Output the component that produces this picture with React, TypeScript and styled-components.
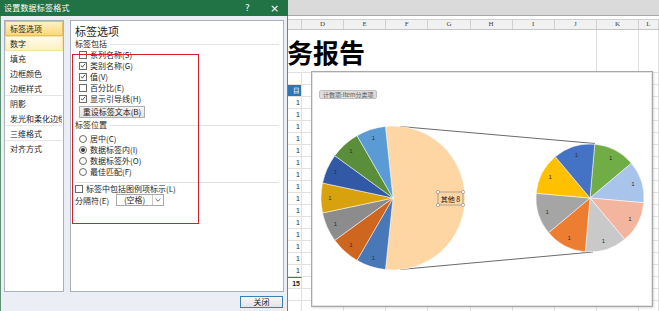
import React from "react";
import styled, { createGlobalStyle } from "styled-components";

const GlobalStyle = createGlobalStyle`
  html, body { margin: 0; padding: 0; background: #ffffff; overflow: hidden; }
  body { font-family: "Noto Sans CJK SC", "Noto Sans", sans-serif; }
  * { box-sizing: border-box; }
`;

const Page = styled.div`
  display: flex;
  width: 659px;
  height: 311px;
  overflow: hidden;
`;

/* ---------------- Dialog ---------------- */

const Dialog = styled.div`
  width: 288px;
  height: 311px;
  flex: none;
  display: flex;
  flex-direction: column;
  background: #ebeff5;
  border-left: 1px solid #5f8f72;
  border-right: 1px solid #5f8f72;
`;

const TitleBar = styled.div`
  height: 16px;
  flex: none;
  display: flex;
  align-items: center;
  background: #217346;
  color: #ffffff;
  padding-left: 4px;
  margin: 0 -1px;
`;

const TitleText = styled.div`
  flex: 1;
  font-size: 8px;
  line-height: 16px;
  letter-spacing: 0.2px;
`;

const TitleButton = styled.div`
  width: 27px;
  height: 16px;
  display: flex;
  align-items: center;
  justify-content: center;
  font-family: "DejaVu Sans", sans-serif;
  font-size: ${(p: { $size: number }) => p.$size}px;
  color: #ffffff;
`;

const DialogBody = styled.div`
  height: 276px;
  flex: none;
  display: flex;
  gap: 6px;
  padding: 4px 3px 0 3px;
`;

const NavList = styled.div`
  width: 60px;
  flex: none;
  background: #ffffff;
  border: 1px solid #a9b2bc;
  display: flex;
  flex-direction: column;
  overflow: hidden;
`;

const NavItem = styled.div<{ $state?: "active" | "hover"; $sep?: boolean }>`
  height: 15px;
  flex: none;
  font-size: 8px;
  line-height: 13px;
  padding-left: 4px;
  color: #262626;
  white-space: nowrap;
  overflow: hidden;
  border: 1px solid
    ${(p) => (p.$state === "active" ? "#e4c062" : p.$state === "hover" ? "#f6e2a2" : "transparent")};
  border-bottom-color: ${(p) =>
    p.$state === "active" ? "#e4c062" : p.$state === "hover" ? "#f6e2a2" : p.$sep ? "#e4e4e4" : "transparent"};
  background: ${(p) =>
    p.$state === "active"
      ? "linear-gradient(#fff1c4, #fcd876)"
      : p.$state === "hover"
      ? "linear-gradient(#fffbe8, #fdf0c2)"
      : "transparent"};
`;

const OptionsPanel = styled.div`
  flex: 1;
  position: relative;
  background: #ffffff;
  border: 1px solid #a9b2bc;
  padding: 2px 4px 0 4px;
  display: flex;
  flex-direction: column;
`;

const PanelTitle = styled.div`
  font-size: 11px;
  line-height: 14px;
  height: 14px;
  color: #1f1f1f;
  margin-top: 1px;
`;

const GroupHeader = styled.div<{ $gap?: number }>`
  height: 10px;
  margin-top: ${(p) => p.$gap ?? 0}px;
  display: flex;
  align-items: center;
  gap: 3px;
  font-size: 8px;
  line-height: 10px;
  color: #262626;
  &::after {
    content: "";
    flex: 1;
    height: 1px;
    background: #e2e2e2;
  }
`;

const OptionRow = styled.div<{ $indent?: number; $height?: number }>`
  height: ${(p) => p.$height ?? 11}px;
  display: flex;
  align-items: center;
  gap: 3px;
  padding-left: ${(p) => p.$indent ?? 4}px;
  font-size: 8px;
  color: #262626;
  white-space: nowrap;
`;

const CheckBox = styled.span`
  width: 8px;
  height: 8px;
  flex: none;
  border: 1px solid #6b6b6b;
  background: #ffffff;
  display: flex;
  align-items: center;
  justify-content: center;
`;

const RadioDot = styled.span<{ $on?: boolean }>`
  width: 8px;
  height: 8px;
  flex: none;
  border: 1px solid #6b6b6b;
  border-radius: 50%;
  background: #ffffff;
  display: flex;
  align-items: center;
  justify-content: center;
  &::after {
    content: "";
    width: 4px;
    height: 4px;
    border-radius: 50%;
    background: ${(p) => (p.$on ? "#333333" : "transparent")};
  }
`;

const ResetButton = styled.div`
  margin: 2px 0 0 4px;
  width: 66px;
  height: 12px;
  border: 1px solid #adadad;
  background: linear-gradient(#f6f6f6, #e2e2e2);
  font-size: 8px;
  line-height: 10px;
  text-align: center;
  color: #262626;
`;

const Divider = styled.div`
  height: 1px;
  background: #e2e2e2;
  margin-top: 5px;
`;

const SelectBox = styled.div`
  margin-left: 4px;
  width: 48px;
  height: 12px;
  border: 1px solid #a8a8a8;
  background: #ffffff;
  display: flex;
`;

const SelectText = styled.div`
  flex: 1;
  font-size: 8px;
  line-height: 10px;
  text-align: center;
  color: #262626;
`;

const SelectArrow = styled.div`
  width: 11px;
  border-left: 1px solid #c8c8c8;
  display: flex;
  align-items: center;
  justify-content: center;
`;

const Annotation = styled.div`
  position: absolute;
  left: 1px;
  top: 33px;
  width: 127px;
  height: 170px;
  border: 1px solid #d0202c;
  pointer-events: none;
`;

const DialogFooter = styled.div`
  flex: 1;
  display: flex;
  justify-content: flex-end;
  align-items: flex-start;
  padding: 4px 4px 0 0;
`;

const CloseButton = styled.div`
  width: 43px;
  height: 12px;
  border: 1px solid #3c7fb1;
  background: linear-gradient(#f7f7f7, #e4e4e4);
  font-size: 8px;
  line-height: 10px;
  text-align: center;
  color: #262626;
`;

/* ---------------- Sheet ---------------- */

const Sheet = styled.div`
  flex: 1;
  display: flex;
  flex-direction: column;
  overflow: hidden;
  background: #ffffff;
`;

const Ribbon = styled.div`
  height: 16px;
  flex: none;
  background: #dadada;
  border-bottom: 1px solid #a6a6a6;
`;

const RibbonGap = styled.div`
  height: 3px;
  flex: none;
`;

const COLS = "14px repeat(8, 42.125px) 1fr";

const HeaderRow = styled.div`
  height: 11px;
  flex: none;
  display: grid;
  grid-template-columns: ${COLS};
  background: #f1f1f1;
  border-top: 1px solid #d0d0d0;
  border-bottom: 1px solid #c6c6c6;
`;

const HeaderCell = styled.div`
  border-right: 1px solid #d0d0d0;
  font-family: "Liberation Serif", serif;
  font-size: 7px;
  line-height: 9px;
  text-align: center;
  color: #444444;
`;

const SheetBody = styled.div`
  flex: 1;
  position: relative;
  overflow: hidden;
`;

const CellGrid = styled.div`
  display: grid;
  grid-template-columns: ${COLS};
`;

const Cell = styled.div<{ $h: number; $fill?: string; $bold?: boolean; $topLine?: boolean }>`
  height: ${(p) => p.$h}px;
  border-right: 1px solid #e1e1e1;
  border-bottom: 1px solid #e1e1e1;
  border-top: ${(p) => (p.$topLine ? "1px solid #4d6a8a" : "none")};
  background: ${(p) => p.$fill ?? "transparent"};
  font-family: "Liberation Sans", sans-serif;
  font-size: 7px;
  font-weight: ${(p) => (p.$bold ? 700 : 400)};
  line-height: ${(p) => p.$h - 1}px;
  text-align: right;
  padding-right: 1px;
  color: ${(p) => (p.$fill ? "#ffffff" : "#222222")};
  overflow: hidden;
  white-space: nowrap;
`;

const TitleCell = styled.div`
  grid-column: 1 / 9;
  height: 43px;
  border-right: 1px solid #e1e1e1;
  border-bottom: 1px solid #e1e1e1;
  font-family: "Noto Sans CJK SC", sans-serif;
  font-size: 26px;
  font-weight: 700;
  line-height: 43px;
  color: #000000;
  white-space: nowrap;
  margin-left: -1px;
`;

const ChartBox = styled.div`
  position: absolute;
  left: 23px;
  top: 41px;
  width: 342px;
  height: 236px;
  background: #ffffff;
  border: 1px solid #a9a9a9;
  box-shadow: inset 0 0 0 1px #e4e4e4, 1px 1px 2px rgba(0, 0, 0, 0.15);
  padding: 6px 0 0 7px;
`;

const FieldTag = styled.div`
  display: inline-block;
  height: 9px;
  padding: 0 3px;
  border: 1px solid #c2c2c2;
  border-radius: 2px;
  background: #dcdcdc;
  font-size: 6px;
  line-height: 7px;
  color: #5a5a5a;
  white-space: nowrap;
`;

const ChartSvg = styled.svg`
  position: absolute;
  left: 0;
  top: 0;
`;

/* ---------------- helpers ---------------- */

function pt(cx: number, cy: number, r: number, deg: number): [number, number] {
  const a = ((deg - 90) * Math.PI) / 180;
  return [cx + r * Math.cos(a), cy + r * Math.sin(a)];
}

function slice(cx: number, cy: number, r: number, a0: number, a1: number) {
  const [x0, y0] = pt(cx, cy, r, a0);
  const [x1, y1] = pt(cx, cy, r, a1);
  const large = a1 - a0 > 180 ? 1 : 0;
  return `M${cx},${cy} L${x0.toFixed(2)},${y0.toFixed(2)} A${r},${r} 0 ${large} 1 ${x1.toFixed(2)},${y1.toFixed(2)} Z`;
}

const Check = () => (
  <svg width="7" height="7" viewBox="0 0 7 7">
    <path d="M1 3.6 L2.8 5.3 L6 1.4" fill="none" stroke="#333" strokeWidth="1" />
  </svg>
);

const LEFT_COLORS = ["#4878b8", "#cf661f", "#8c8c8c", "#d8a10e", "#3159a6", "#5b8e3b", "#5b9bd5"];
const RIGHT_COLORS = ["#70ad47", "#a9c4ea", "#f4b59e", "#c9c9c9", "#ed7d31", "#a5a5a5", "#ffc000", "#4472c4"];

const PieChart = () => {
  const lc = { x: 81, y: 126, r: 72 };
  const rc = { x: 278, y: 126, r: 54 };
  return (
    <ChartSvg width="342" height="236" viewBox="0 0 342 236">
      <line x1="88" y1="54.5" x2="283" y2="71.5" stroke="#595959" strokeWidth="0.9" />
      <line x1="88" y1="197.5" x2="281" y2="180" stroke="#595959" strokeWidth="0.9" />
      <path d={slice(lc.x, lc.y, lc.r, -6, 186)} fill="#fdd6a4" stroke="#ffffff" strokeWidth="0.5" />
      {LEFT_COLORS.map((c, i) => {
        const a0 = 186 + i * 24;
        const [tx, ty] = pt(lc.x, lc.y, 63, a0 + 12);
        return (
          <g key={c}>
            <path d={slice(lc.x, lc.y, lc.r, a0, a0 + 24)} fill={c} stroke="#ffffff" strokeWidth="0.5" />
            <text x={tx} y={ty + 2} fontSize="6" fill="#303030" textAnchor="middle" fontFamily="Liberation Sans, sans-serif">
              1
            </text>
          </g>
        );
      })}
      {RIGHT_COLORS.map((c, i) => {
        const a0 = 5 + i * 45;
        const [tx, ty] = pt(rc.x, rc.y, 45, a0 + 22.5);
        return (
          <g key={c}>
            <path d={slice(rc.x, rc.y, rc.r, a0, a0 + 45)} fill={c} stroke="#ffffff" strokeWidth="0.5" />
            <text x={tx} y={ty + 2} fontSize="6" fill="#303030" textAnchor="middle" fontFamily="Liberation Sans, sans-serif">
              1
            </text>
          </g>
        );
      })}
      <rect x="126" y="120" width="25" height="13" fill="#fdd6a4" stroke="#7f7f7f" strokeWidth="0.6" />
      {[
        [126, 120],
        [151, 120],
        [126, 133],
        [151, 133],
      ].map(([x, y]) => (
        <circle key={`${x}-${y}`} cx={x} cy={y} r="1.6" fill="#ffffff" stroke="#6f6f6f" strokeWidth="0.5" />
      ))}
      <text x="138.5" y="129.5" fontSize="7" fill="#111111" textAnchor="middle" fontFamily="Noto Sans CJK SC, sans-serif">
        其他 8
      </text>
    </ChartSvg>
  );
};

const NAV: { label: string; state?: "active" | "hover"; sep?: boolean }[] = [
  { label: "标签选项", state: "active" },
  { label: "数字", state: "hover" },
  { label: "填充" },
  { label: "边框颜色" },
  { label: "边框样式", sep: true },
  { label: "阴影" },
  { label: "发光和柔化边缘", sep: true },
  { label: "三维格式", sep: true },
  { label: "对齐方式" },
];

const INCLUDE: { label: string; on: boolean }[] = [
  { label: "系列名称(S)", on: false },
  { label: "类别名称(G)", on: true },
  { label: "值(V)", on: true },
  { label: "百分比(E)", on: false },
  { label: "显示引导线(H)", on: true },
];

const POSITION: { label: string; on: boolean }[] = [
  { label: "居中(C)", on: false },
  { label: "数据标签内(I)", on: true },
  { label: "数据标签外(O)", on: false },
  { label: "最佳匹配(F)", on: false },
];

const LETTERS = ["", "D", "E", "F", "G", "H", "I", "J", "K", "L"];

type RowSpec = { h: number; text?: string; fill?: string; bold?: boolean; topLine?: boolean };

const ROWS: RowSpec[] = [
  { h: 12 },
  { h: 12, text: "目", fill: "#2e75b6" },
  ...Array.from({ length: 15 }, () => ({ h: 12, text: "1" })),
  { h: 12, text: "15", bold: true, topLine: true },
  { h: 12 },
  { h: 12 },
];

export default function App() {
  return (
    <>
      <GlobalStyle />
      <Page>
        <Dialog>
          <TitleBar>
            <TitleText>设置数据标签格式</TitleText>
            <TitleButton $size={9}>?</TitleButton>
            <TitleButton $size={11}>×</TitleButton>
          </TitleBar>
          <DialogBody>
            <NavList>
              {NAV.map((n) => (
                <NavItem key={n.label} $state={n.state} $sep={n.sep}>
                  {n.label}
                </NavItem>
              ))}
            </NavList>
            <OptionsPanel>
              <PanelTitle>标签选项</PanelTitle>
              <GroupHeader $gap={1}>标签包括</GroupHeader>
              {INCLUDE.map((o) => (
                <OptionRow key={o.label}>
                  <CheckBox>{o.on && <Check />}</CheckBox>
                  {o.label}
                </OptionRow>
              ))}
              <ResetButton>重设标签文本(B)</ResetButton>
              <GroupHeader $gap={2}>标签位置</GroupHeader>
              <OptionRow $height={3} />
              {POSITION.map((o) => (
                <OptionRow key={o.label}>
                  <RadioDot $on={o.on} />
                  {o.label}
                </OptionRow>
              ))}
              <Divider />
              <OptionRow $indent={0} $height={11}>
                <CheckBox />
                标签中包括图例项标示(L)
              </OptionRow>
              <OptionRow $indent={0} $height={12}>
                分隔符(E)
                <SelectBox>
                  <SelectText>(空格)</SelectText>
                  <SelectArrow>
                    <svg width="6" height="4" viewBox="0 0 6 4">
                      <path d="M0.5 0.8 L3 3.2 L5.5 0.8" fill="none" stroke="#555" strokeWidth="0.9" />
                    </svg>
                  </SelectArrow>
                </SelectBox>
              </OptionRow>
              <Annotation />
            </OptionsPanel>
          </DialogBody>
          <DialogFooter>
            <CloseButton>关闭</CloseButton>
          </DialogFooter>
        </Dialog>
        <Sheet>
          <Ribbon />
          <RibbonGap />
          <HeaderRow>
            {LETTERS.map((l, i) => (
              <HeaderCell key={i}>{l}</HeaderCell>
            ))}
          </HeaderRow>
          <SheetBody>
            <CellGrid>
              <TitleCell>务报告</TitleCell>
              <Cell $h={43} />
              <Cell $h={43} />
              {ROWS.map((r, ri) =>
                LETTERS.map((_, ci) => (
                  <Cell
                    key={`${ri}-${ci}`}
                    $h={r.h}
                    $fill={ci === 0 ? r.fill : undefined}
                    $bold={r.bold}
                    $topLine={ci === 0 && r.topLine}
                  >
                    {ci === 0 ? r.text : null}
                  </Cell>
                ))
              )}
            </CellGrid>
            <ChartBox>
              <FieldTag>计数项:Item分类项</FieldTag>
              <PieChart />
            </ChartBox>
          </SheetBody>
        </Sheet>
      </Page>
    </>
  );
}
